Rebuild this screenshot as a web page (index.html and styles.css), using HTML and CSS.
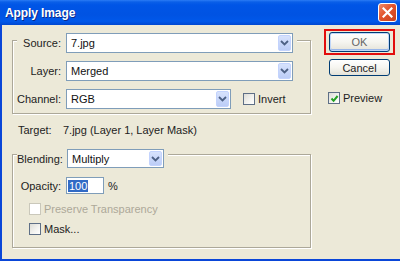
FILE: index.html
```html
<!DOCTYPE html>
<html>
<head>
<meta charset="utf-8">
<link rel="stylesheet" href="styles.css">
</head>
<body>
<div class="win">
  <div class="title">
    <span class="title-text">Apply Image</span>
    <span class="close"><svg width="11" height="11" viewBox="0 0 11 11"><path d="M1.5 1.5 L9.5 9.5 M9.5 1.5 L1.5 9.5" stroke="#fff" stroke-width="2.2" stroke-linecap="square"/></svg></span>
  </div>
  <div class="body">
    <div class="main">
      <div class="group g1">
        <div class="row first">
          <span class="lbl">Source:</span>
          <div class="select w-src"><span class="val">7.jpg</span><span class="btn"><svg width="9" height="6" viewBox="0 0 9 6"><path d="M1 1 L4.5 4.5 L8 1" fill="none" stroke="#4d6185" stroke-width="1.8"/></svg></span></div>
        </div>
        <div class="row">
          <span class="lbl">Layer:</span>
          <div class="select w-src"><span class="val">Merged</span><span class="btn"><svg width="9" height="6" viewBox="0 0 9 6"><path d="M1 1 L4.5 4.5 L8 1" fill="none" stroke="#4d6185" stroke-width="1.8"/></svg></span></div>
        </div>
        <div class="row">
          <span class="lbl">Channel:</span>
          <div class="select w-ch"><span class="val">RGB</span><span class="btn"><svg width="9" height="6" viewBox="0 0 9 6"><path d="M1 1 L4.5 4.5 L8 1" fill="none" stroke="#4d6185" stroke-width="1.8"/></svg></span></div>
          <span class="cb inv-cb"></span><span class="cb-text">Invert</span>
        </div>
      </div>
      <div class="target"><span class="t-lbl">Target:</span><span>7.jpg (Layer 1, Layer Mask)</span></div>
      <div class="group g2">
        <div class="row first blend">
          <span class="lbl">Blending:</span>
          <div class="select w-bl"><span class="val">Multiply</span><span class="btn"><svg width="9" height="6" viewBox="0 0 9 6"><path d="M1 1 L4.5 4.5 L8 1" fill="none" stroke="#4d6185" stroke-width="1.8"/></svg></span></div>
        </div>
        <div class="row opac">
          <span class="lbl">Opacity:</span>
          <div class="input"><span class="sel">100</span></div>
          <span class="pct">%</span>
        </div>
        <div class="chkrow disabled"><span class="cb"></span><span class="cb-text">Preserve Transparency</span></div>
        <div class="chkrow mask"><span class="cb"></span><span class="cb-text">Mask...</span></div>
      </div>
    </div>
    <div class="side">
      <div class="okwrap"><div class="btn-xp ok">OK</div></div>
      <div class="btn-xp cancel">Cancel</div>
      <div class="chkrow preview"><span class="cb checked"><svg width="9" height="9" viewBox="0 0 9 9"><path d="M1.5 4.5 L3.6 6.8 L7.6 2" fill="none" stroke="#21a121" stroke-width="2"/></svg></span><span class="cb-text">Preview</span></div>
    </div>
  </div>
</div>
</body>
</html>
```

FILE: styles.css
```css
* { box-sizing: border-box; }
body { margin: 0; }
.win {
  width: 400px;
  height: 261px;
  display: flex;
  flex-direction: column;
  font: 11px "Liberation Sans", Arial, sans-serif;
  color: #222;
  overflow: hidden;
}
.title {
  height: 25px;
  flex: none;
  display: flex;
  align-items: center;
  justify-content: space-between;
  padding: 0 3px 0 5px;
  background: linear-gradient(#2b7cf5 0, #0a5fe8 2px, #0055e6 5px, #0053e3 60%, #0058ea 85%, #0047d0 100%);
}
.title-text {
  color: #fff;
  font: bold 12px "Liberation Sans", Arial, sans-serif;
  text-shadow: 1px 1px 0 #0c2a8a;
  letter-spacing: -0.1px;
}
.close {
  width: 19px;
  height: 19px;
  border: 1px solid #fff;
  border-radius: 3px;
  background: linear-gradient(135deg, #f08a6a 0, #e2542c 45%, #c8401e 100%);
  display: flex;
  align-items: center;
  justify-content: center;
}
.body {
  flex: 1;
  display: flex;
  background: #ece9d8;
  border-left: 2px solid #0a46d8;
  border-bottom: 2px solid #0a46d8;
  padding-left: 10px;
}
.main {
  width: 300px;
  display: flex;
  flex-direction: column;
}
.group {
  width: 299px;
  border: 1px solid #aca899;
  box-shadow: 1px 1px 0 #fff, inset 1px 1px 0 #fff;
}
.row {
  display: flex;
  align-items: center;
  height: 20px;
}
.lbl {
  width: 48px;
  margin-right: 5px;
  text-align: right;
}
.row.first {
  background: #ece9d8;
  margin-left: 4px;
  padding-right: 4px;
  align-self: flex-start;
}
.row.first .lbl { width: 44px; }
.g1 { margin-top: 15px; padding-bottom: 4px; display: flex; flex-direction: column; }
.g1 .row.first { margin-top: -8px; }
.g1 .row + .row { margin-top: 8px; }
.select {
  height: 20px;
  display: flex;
  border: 1px solid #7f9db9;
  background: #fff;
  padding: 1px;
}
.select .val {
  flex: 1;
  padding-left: 3px;
  line-height: 16px;
  color: #111;
}
.select .btn {
  width: 13px;
  border: 1px solid #c3d3fd;
  border-radius: 2px;
  background: linear-gradient(#d7e2fc, #bccdf7);
  display: flex;
  align-items: center;
  justify-content: center;
}
.w-src { width: 227px; }
.w-ch { width: 165px; }
.w-bl { width: 97px; height: 19px; }
.cb {
  width: 12px;
  height: 12px;
  border: 1px solid #5e6f86;
  background: linear-gradient(135deg, #dcdcd6 0, #f4f4f1 60%, #fff 100%);
  display: flex;
  align-items: center;
  justify-content: center;
  flex: none;
}
.inv-cb { margin-left: 12px; }
.cb-text { margin-left: 3px; }
.target {
  margin-top: 8px;
  height: 16px;
  line-height: 16px;
  padding-left: 6px;
  display: flex;
}
.t-lbl { width: 45px; }
.g2 {
  margin-top: 16px;
  padding-bottom: 12px;
  display: flex;
  flex-direction: column;
}
.g2 .row.first { margin-top: -6px; height: 19px; }
.g2 .blend .lbl { width: 41px; margin-right: 9px; }
.opac { margin-top: 9px; height: 17px; }
.input {
  width: 38px;
  height: 17px;
  border: 1px solid #7f9db9;
  background: #fff;
  padding: 2px 0 0 1px;
}
.sel {
  display: inline-block;
  background: #316ac5;
  color: #fff;
  line-height: 12px;
  padding: 0 1px;
}
.pct { margin-left: 4px; }
.chkrow {
  display: flex;
  align-items: center;
  height: 12px;
}
.g2 .chkrow { margin-left: 16px; }
.disabled { margin-top: 9px; color: #aca899; }
.disabled .cb { border-color: #cac8bb; background: #fff; }
.mask { margin-top: 8px; }
.side {
  margin-left: 12px;
  margin-top: 4px;
  display: flex;
  flex-direction: column;
}
.okwrap {
  width: 71px;
  border: 2px solid #e20d0d;
  padding: 1px 3px;
}
.btn-xp {
  width: 61px;
  border: 1px solid #003c74;
  border-radius: 3px;
  background: linear-gradient(#fff 0, #f6f5f0 50%, #e4e2d8 100%);
  display: flex;
  align-items: center;
  justify-content: center;
  color: #222;
}
.ok {
  height: 20px;
  color: #666;
  box-shadow: inset 0 0 0 1px #c0d6f8, inset 0 -1px 0 1px #99b6ea;
}
.cancel {
  height: 17px;
  margin-top: 4px;
  margin-left: 5px;
}
.preview { margin-top: 16px; margin-left: 4px; }
.checked { border-color: #5e6f86; }
```
